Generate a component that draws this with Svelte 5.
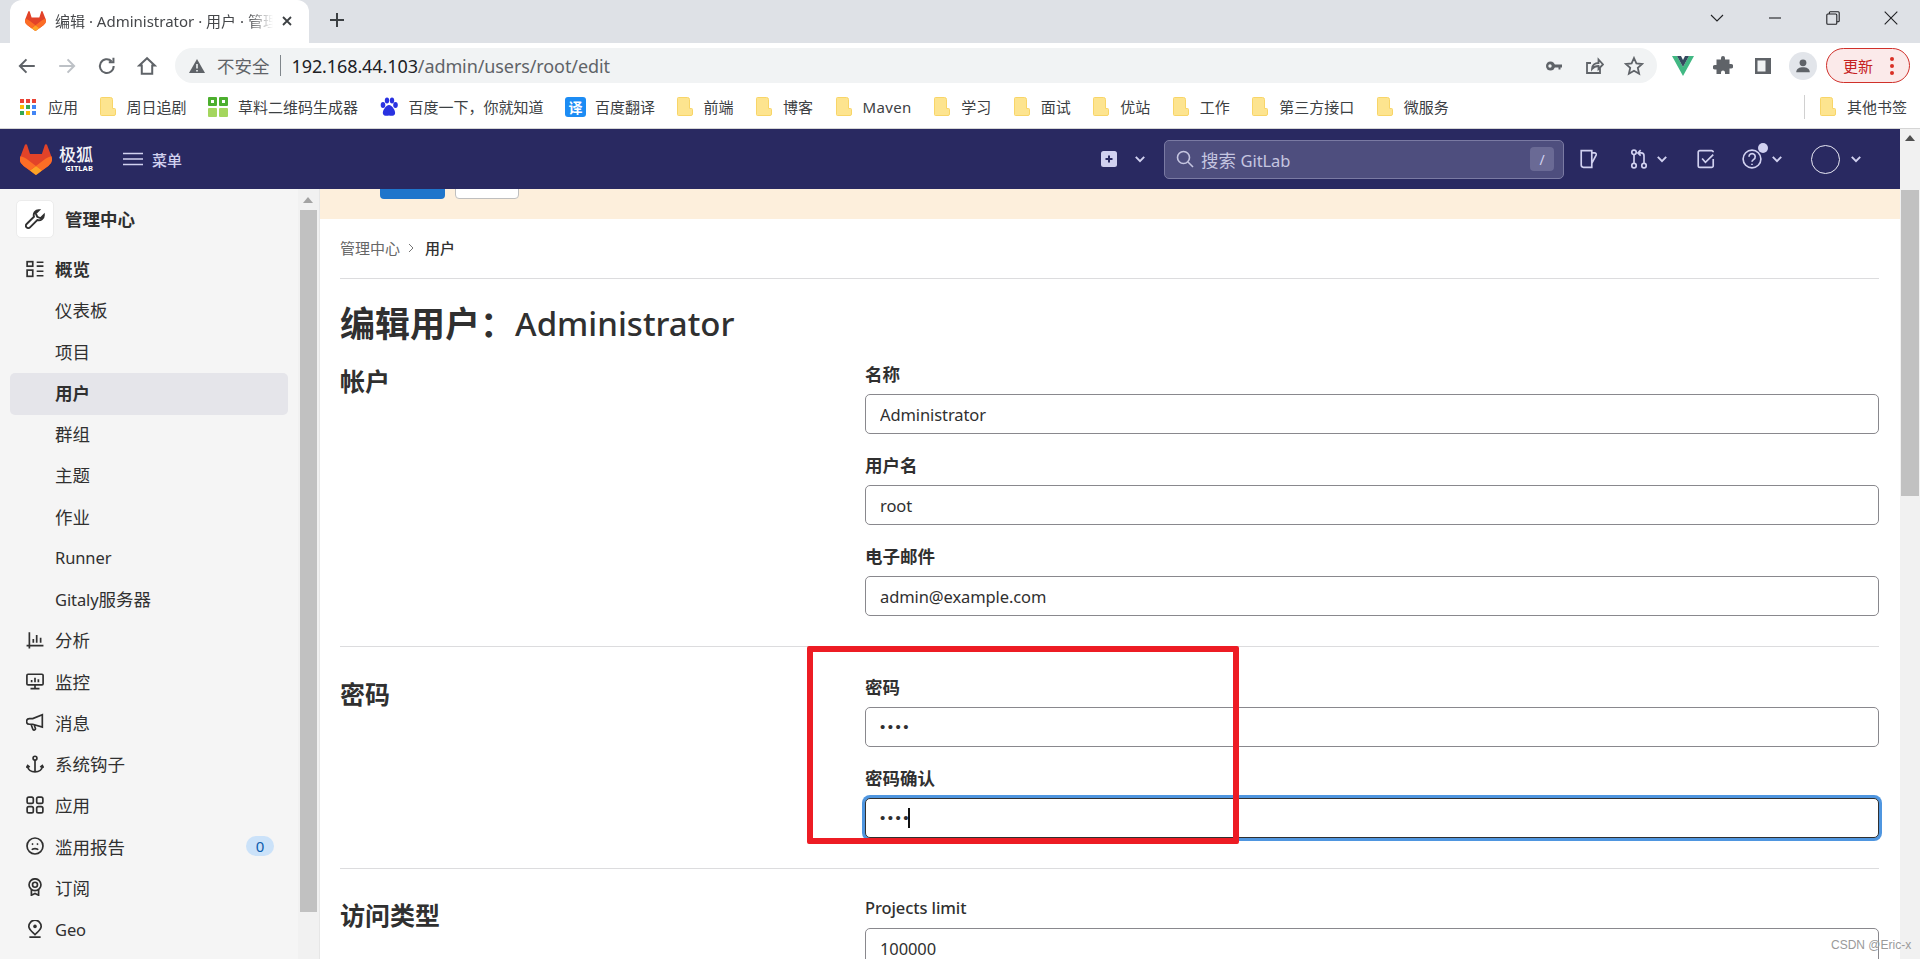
<script>
  const bookmarks = [
    { label: '应用', kind: 'apps' },
    { label: '周日追剧', kind: 'folder' },
    { label: '草料二维码生成器', kind: 'qr' },
    { label: '百度一下，你就知道', kind: 'baidu' },
    { label: '百度翻译', kind: 'tr' },
    { label: '前端', kind: 'folder' },
    { label: '博客', kind: 'folder' },
    { label: 'Maven', kind: 'folder', wide: true },
    { label: '学习', kind: 'folder' },
    { label: '面试', kind: 'folder' },
    { label: '优站', kind: 'folder' },
    { label: '工作', kind: 'folder' },
    { label: '第三方接口', kind: 'folder' },
    { label: '微服务', kind: 'folder' }
  ];
  const appColors = ['#ea4335','#ea4335','#ea4335','#fbbc05','#34a853','#4285f4','#34a853','#fbbc05','#4285f4'];
  const menu = [
    { label: '概览', icon: 'overview', bold: true },
    { label: '仪表板' },
    { label: '项目' },
    { label: '用户', active: true },
    { label: '群组' },
    { label: '主题' },
    { label: '作业' },
    { lat: 'Runner', label: '' },
    { lat: 'Gitaly', label: '服务器' },
    { label: '分析', icon: 'chart' },
    { label: '监控', icon: 'monitor' },
    { label: '消息', icon: 'horn' },
    { label: '系统钩子', icon: 'hook' },
    { label: '应用', icon: 'apps' },
    { label: '滥用报告', icon: 'frown', badge: '0' },
    { label: '订阅', icon: 'cert' },
    { lat: 'Geo', label: '', icon: 'pin' }
  ];
</script>

{#snippet chev()}
  <svg class="chev" viewBox="0 0 10 10"><path d="M1.5 3.2 5 6.8l3.5-3.6" /></svg>
{/snippet}

{#snippet tanuki(cls)}
  <svg class={cls} viewBox="0 0 25 24">
    <path fill="#E24329" d="M24.507 9.5l-.034-.09L21.082.562a.896.896 0 00-1.694.091l-2.29 7.01H7.825L5.535.653a.898.898 0 00-1.694-.09L.451 9.411.416 9.5a6.297 6.297 0 002.09 7.278l.012.01.03.022 5.16 3.867 2.56 1.935 1.554 1.176a1.051 1.051 0 001.268 0l1.555-1.176 2.56-1.935 5.197-3.89.014-.01A6.297 6.297 0 0024.507 9.5z"/>
    <path fill="#FC6D26" d="M24.507 9.5l-.034-.09a11.44 11.44 0 00-4.56 2.051l-7.447 5.632 4.742 3.584 5.197-3.89.014-.01A6.297 6.297 0 0024.507 9.5z"/>
    <path fill="#FCA326" d="M7.707 20.677l2.56 1.935 1.555 1.176a1.051 1.051 0 001.268 0l1.555-1.176 2.56-1.935-4.743-3.584-4.755 3.584z"/>
    <path fill="#FC6D26" d="M5.01 11.461a11.43 11.43 0 00-4.56-2.05L.416 9.5a6.297 6.297 0 002.09 7.278l.012.01.03.022 5.16 3.867 4.745-3.584-7.444-5.632z"/>
  </svg>
{/snippet}

{#snippet menuIcon(name)}
  <svg class="micon" viewBox="0 0 16 16">
    {#if name === 'overview'}
      <rect x="1" y="1.5" width="5" height="4"/><rect x="1" y="9" width="5" height="5.5"/>
      <path d="M9.5 2h6M9.5 5.500h6M9.500 10h6M9.500 14h6"/>
    {:else if name === 'chart'}
      <path d="M3 1v14.500M.5 13h15M6.500 7v3.500M9.500 3.500v7M13 6v4.500"/>
    {:else if name === 'monitor'}
      <rect x=".8" y="2" width="14.400" height="9.500" rx="1"/><path d="M8 11.500v3M4 14.700h8M5 9V7M8 9V5M11 9V6.500"/>
    {:else if name === 'horn'}
      <path d="M14.500 1.500v11L6 10H3a2.200 2.200 0 0 1 0-5h3l8.500-3.500zM4.500 10l1.500 4.300a1.200 1.200 0 0 0 2.300-.8L7.300 10.600"/>
    {:else if name === 'hook'}
      <circle cx="8" cy="2.800" r="1.700"/><path d="M8 4.500v10.500M1.500 9.500c0 3.500 3 5.500 6.500 5.500s6.500-2 6.500-5.500M.3 11.300l1.200-2 1.800 1.500M15.700 11.300l-1.200-2-1.800 1.500"/>
    {:else if name === 'apps'}
      <rect x="1" y="1" width="5.500" height="5.500" rx="1.500"/><rect x="9.500" y="1" width="5.500" height="5.500" rx="1.500"/>
      <rect x="1" y="9.500" width="5.500" height="5.500" rx="1.500"/><rect x="9.500" y="9.500" width="5.500" height="5.500" rx="1.500"/>
    {:else if name === 'frown'}
      <circle cx="8" cy="8" r="7.100"/><path d="M5.200 11.300c.8-1.400 4.800-1.400 5.600 0M5.300 5.800l1 1M10.700 5.800l-1 1"/>
    {:else if name === 'cert'}
      <circle cx="8" cy="6" r="5.300"/><circle cx="8" cy="6" r="2.200"/><path d="M4.800 10.500v4.800L8 13.700l3.200 1.600v-4.800"/>
    {:else if name === 'pin'}
      <path d="M8 13C5.500 10.500 2.500 8.200 2.500 5.700a5.500 5.500 0 0 1 11 0C13.500 8.200 10.500 10.500 8 13zM3 15.300h10"/><circle class="solid" cx="8" cy="5.700" r="1.600"/>
    {/if}
  </svg>
{/snippet}

<div class="screen">
  <header class="tabstrip">
    <div class="tab">
      {@render tanuki('favicon')}
      <span class="tab-title">编辑 · Administrator · 用户 · 管理中心 · GitLab</span>
      <svg class="tab-x" viewBox="0 0 12 12"><path d="M2 2l8 8M10 2l-8 8"/></svg>
    </div>
    <svg class="plus" viewBox="0 0 16 16"><path d="M8 1v14M1 8h14"/></svg>
    <div class="winctl">
      <svg class="win" viewBox="0 0 14 14"><path d="M1 4l6 6 6-6"/></svg>
      <svg class="win" viewBox="0 0 14 14"><path d="M1 7h12"/></svg>
      <svg class="win" viewBox="0 0 14 14"><rect x=".8" y="3" width="10" height="10.200" rx="1"/><path d="M3.300 3V1.800a1 1 0 0 1 1-1h7.900a1 1 0 0 1 1 1v8a1 1 0 0 1-1 1h-1.400"/></svg>
      <svg class="win" viewBox="0 0 14 14"><path d="M.7.7l12.600 12.600M13.300.7.7 13.300"/></svg>
    </div>
  </header>

  <div class="toolbar">
    <button class="tb"><svg viewBox="0 0 18 18"><path d="M16 9H3M8.500 3 2.600 9l5.900 6"/></svg></button>
    <button class="tb off"><svg viewBox="0 0 18 18"><path d="M2 9h13M9.500 3l5.900 6-5.900 6"/></svg></button>
    <button class="tb"><svg viewBox="0 0 18 18"><path d="M15 9a6.200 6.200 0 1 1-1.900-4.400M14.800 1.500v4.200h-4.200"/></svg></button>
    <button class="tb"><svg viewBox="0 0 18 18"><path d="M9 2 2 8.500h2.300V16h9.400V8.500H16z"/></svg></button>
    <div class="omni">
      <svg class="warn" viewBox="0 0 18 18"><path d="M9 2 17 16H1z"/><path class="cut" d="M9 7v4.500M9 13v1.500"/></svg>
      <span class="insecure">不安全</span>
      <span class="sep"></span>
      <span class="url"><b>192.168.44.103</b>/admin/users/root/edit</span>
      <div class="omni-actions">
        <button class="tb"><svg viewBox="0 0 20 20"><circle class="filled" cx="6.500" cy="10" r="4.500"/><path class="bar" d="M9 8.500h9v3h-1.500v2h-2v-2H10z"/><circle class="hole" cx="6" cy="10" r="1.700"/></svg></button>
        <button class="tb"><svg viewBox="0 0 20 20"><path d="M16 12v5H3V7h4M8 13c0-4 3-6 6.500-6V3.500L19 8.500l-4.500 4.500V10c-3 0-5 1-6.500 3z"/></svg></button>
        <button class="tb"><svg viewBox="0 0 20 20"><path d="M10 2l2.400 5.400 5.800.6-4.400 3.900 1.300 5.800L10 14.700l-5.100 3 1.300-5.800L1.800 8l5.800-.6z"/></svg></button>
      </div>
    </div>
    <button class="tb vue"><svg viewBox="0 0 24 22"><path fill="#41b883" d="M1 1h5l6 11L18 1h5L12 21z"/><path fill="#34495e" d="M6 1h4l2 4 2-4h4l-6 11z"/></svg></button>
    <button class="tb"><svg viewBox="0 0 20 20"><path class="filled" d="M8 2a2 2 0 0 1 4 0v1.500h4.500V8H18a2.200 2.200 0 0 1 0 4.500h-1.500V18H12v-1.500a2 2 0 0 0-4 0V18H3.500v-4.500H2a2.200 2.200 0 0 1 0-4.500h1.500V3.500H8z"/></svg></button>
    <button class="tb"><svg viewBox="0 0 20 20"><rect x="2" y="2" width="16" height="16" class="filled"/><rect x="4.500" y="4.500" width="8" height="11" class="hole"/></svg></button>
    <button class="tb"><span class="profile"><svg viewBox="0 0 20 20"><circle class="filled" cx="10" cy="6.500" r="3.800"/><path class="filled" d="M2.500 17c0-4 3.500-5.500 7.500-5.500s7.500 1.500 7.500 5.500z"/></svg></span></button>
    <div class="update"><span>更新</span><span class="kebab"><i></i><i></i><i></i></span></div>
  </div>

  <nav class="bookmarks">
    {#each bookmarks as b}
      <div class="bm">
        <span class="bm-ico {b.kind}">
          {#if b.kind === 'apps'}
            <span class="appgrid">{#each appColors as c}<i style="background:{c}"></i>{/each}</span>
          {:else if b.kind === 'folder'}
            <svg class="folder" viewBox="0 0 16 19"><path d="M1.500.5h9a2 2 0 0 1 2 2v9h2a1 1 0 0 1 1 1v4.500a1.500 1.500 0 0 1-1.500 1.500h-12.500a1 1 0 0 1-1-1V1.500a1 1 0 0 1 1-1z"/></svg>
          {:else if b.kind === 'qr'}
            <svg class="qr" viewBox="0 0 20 20"><rect x="0" y="0" width="9" height="9" rx="1" fill="#4caf2e"/><rect x="11" y="0" width="9" height="9" rx="1" fill="#4caf2e"/><rect x="0" y="11" width="9" height="9" rx="1" fill="#a4d65e"/><rect x="11" y="11" width="9" height="9" rx="1" fill="#a4d65e"/><rect x="3" y="3" width="3" height="3" fill="#fff"/><rect x="14" y="3" width="3" height="3" fill="#fff"/></svg>
          {:else if b.kind === 'baidu'}
            <svg class="paw" viewBox="0 0 18 20" fill="#2932e1"><ellipse cx="3" cy="8" rx="2.300" ry="3"/><ellipse cx="7" cy="3.500" rx="2.200" ry="3"/><ellipse cx="12" cy="3.500" rx="2.200" ry="3"/><ellipse cx="15.500" cy="8" rx="2.300" ry="3"/><path d="M9 8c3 0 7 6 6 9-.6 2-4 2-6 1.500C7 19 3.500 19 3 17 2 14 6 8 9 8z"/></svg>
          {:else if b.kind === 'tr'}
            <span class="trbox">译</span>
          {/if}
        </span>
        <span class:wide={b.wide}>{b.label}</span>
      </div>
    {/each}
    <div class="bm-right">
      <span class="bm-div"></span>
      <div class="bm">
        <span class="bm-ico folder"><svg class="folder" viewBox="0 0 16 19"><path d="M1.500.5h9a2 2 0 0 1 2 2v9h2a1 1 0 0 1 1 1v4.500a1.500 1.500 0 0 1-1.500 1.500h-12.500a1 1 0 0 1-1-1V1.500a1 1 0 0 1 1-1z"/></svg></span>
        <span>其他书签</span>
      </div>
    </div>
  </nav>

  <div class="viewport">
    <div class="page">
      <div class="navbar">
        {@render tanuki('logo')}
        <div class="brand"><span class="brand-cn">极狐</span><span class="brand-en">GITLAB</span></div>
        <svg class="burger" viewBox="0 0 20 14"><path d="M0 1.500h20M0 7h20M0 12.500h20"/></svg>
        <span class="menu-label">菜单</span>

        <svg class="plus-box" viewBox="0 0 16 16"><rect width="16" height="16" rx="2.500" fill="#d1d1f0"/><path d="M8 4.500v7M4.500 8h7" stroke="#292961" stroke-width="2"/></svg>
        <span class="c-plus">{@render chev()}</span>
        <div class="search">
          <svg class="s-ico" viewBox="0 0 18 18"><circle cx="7.500" cy="7.500" r="6"/><path d="M12 12l5 5"/></svg>
          <span>搜索 <span class="lat">GitLab</span></span>
          <kbd>/</kbd>
        </div>
        <svg class="nico n-issue" viewBox="0 0 18 18"><path d="M2 1.500h9.500v15H4a2 2 0 0 1-2-2zM11.500 3.500H14c1 0 1.800 1 1.400 2L11.500 13"/></svg>
        <svg class="nico n-mr" viewBox="0 0 18 18"><circle cx="4.500" cy="3" r="2"/><circle cx="4.500" cy="15" r="2"/><circle cx="13.500" cy="15" r="2"/><path d="M4.500 5v8M13.500 13V6c0-1.500-1-2.500-2.500-2.500H8.500M10.500 1 8 3.500 10.500 6"/></svg>
        <span class="c-mr">{@render chev()}</span>
        <svg class="nico n-todo" viewBox="0 0 18 18"><path d="M15.500 9v6a1.500 1.500 0 0 1-1.500 1.500H3.500A1.500 1.500 0 0 1 2 15V3a1.500 1.500 0 0 1 1.500-1.500H14A1.500 1.500 0 0 1 15.500 3M5.500 8.500l3 3.500L15.500 5"/></svg>
        <span class="help">
          <svg class="nico" viewBox="0 0 18 18"><circle cx="9" cy="9" r="8"/><path d="M6.300 7a2.800 2.800 0 1 1 4.300 2.300C9.500 10 9 10.500 9 11.500M9 13.200v1.200"/></svg>
          <i class="help-dot"></i>
        </span>
        <span class="c-help">{@render chev()}</span>
        <span class="avatar"></span>
        <span class="c-av">{@render chev()}</span>
      </div>

      <div class="under">
        <aside class="sidebar">
          <div class="side-main">
            <div class="ctx">
              <span class="tile">
                <svg class="micon" viewBox="0 0 16 16"><path d="M11.200.9a4 4 0 0 0-4 5.300L1.300 12a1.900 1.900 0 0 0 2.700 2.700l5.800-5.900a4 4 0 0 0 5.300-4L12.500 7.400 9.800 6.200 8.600 3.500 11.200.9z"/></svg>
              </span>
              <span class="ctx-title">管理中心</span>
            </div>
            {#each menu as m}
              <div class="item" class:active={m.active} class:bold={m.bold}>
                {#if m.icon}{@render menuIcon(m.icon)}{:else}<span class="micon-space"></span>{/if}
                <span>{#if m.lat}<span class="lat">{m.lat}</span>{/if}{m.label}</span>
                {#if m.badge}<span class="badge">{m.badge}</span>{/if}
              </div>
            {/each}
          </div>
          <div class="side-scroll"><i class="arrow"></i><i class="thumb-side"></i></div>
        </aside>

        <main class="content">
          <div class="banner"><span class="btn-blue"></span><span class="btn-white"></span></div>
          <div class="inner">
            <div class="crumbs">
              <span class="crumb-a">管理中心</span>
              <svg class="crumb-c" viewBox="0 0 8 10"><path d="M2 1l4 4-4 4"/></svg>
              <span class="crumb-b">用户</span>
            </div>
            <h1><b>编辑用户：</b>Administrator</h1>

            <section class="sec first">
              <h3>帐户</h3>
              <div class="fields">
                <div class="field"><label for="f1">名称</label><input id="f1" value="Administrator" readonly /></div>
                <div class="field"><label for="f2">用户名</label><input id="f2" value="root" readonly /></div>
                <div class="field"><label for="f3">电子邮件</label><input id="f3" value="admin@example.com" readonly /></div>
              </div>
            </section>
            <section class="sec">
              <h3>密码</h3>
              <div class="fields">
                <div class="field"><label for="f4">密码</label><div class="input dots">••••</div></div>
                <div class="field"><label for="f5">密码确认</label><div class="input dots focus">••••<i class="caret"></i></div></div>
              </div>
            </section>
            <section class="sec">
              <h3>访问类型</h3>
              <div class="fields">
                <div class="field"><label class="plain" for="f6">Projects limit</label><input id="f6" value="100000" readonly /></div>
              </div>
            </section>
          </div>
        </main>
      </div>
    </div>
    <div class="page-scroll"><i class="arrow"></i><i class="thumb-page"></i></div>
  </div>

  <div class="annot"></div>
  <div class="wm">CSDN @Eric-x</div>
</div>

<style>
  :global(body) { margin: 0; background: #fff; }
  .screen {
    position: relative;
    width: 1920px; height: 959px; overflow: hidden;
    display: flex; flex-direction: column;
    font-family: "Noto Sans", "Noto Sans CJK SC", sans-serif;
    color: #303030;
  }
  button { border: 0; background: none; padding: 0; }
  svg { display: block; }
  .lat { font-size: 16.500px; letter-spacing: -.1px; }

  /* browser chrome */
  .tabstrip { height: 43px; background: #dee1e6; display: flex; align-items: flex-end; padding-left: 10px; flex: none; }
  .tab {
    width: 299px; height: 43px; background: #fff; border-radius: 12px 12px 0 0;
    display: flex; align-items: center; padding: 0 0 2px 15px; box-sizing: border-box;
  }
  .favicon { width: 21px; height: 20px; flex: none; }
  .tab-title {
    margin-left: 9px; width: 218px; overflow: hidden; white-space: nowrap; font-size: 15px; color: #45474a;
    -webkit-mask-image: linear-gradient(90deg, #000 88%, transparent);
    mask-image: linear-gradient(90deg, #000 88%, transparent);
  }
  .tab-x { width: 12px; height: 12px; margin-left: 8px; }
  .tab-x path { stroke: #3c4043; stroke-width: 1.800; fill: none; }
  .plus { width: 16px; height: 16px; margin: 0 0 15px 20px; }
  .plus path { stroke: #3c4043; stroke-width: 2; fill: none; }
  .winctl { margin-left: auto; height: 43px; box-sizing: border-box; display: flex; align-items: flex-start; padding: 11px 22px 0 0; gap: 44px; }
  .win { width: 14px; height: 14px; }
  .win path, .win rect { stroke: #202124; stroke-width: 1.100; fill: none; }

  .toolbar { height: 45px; background: #fff; display: flex; align-items: center; padding-left: 7px; flex: none; }
  .tb { width: 40px; height: 35px; display: flex; align-items: center; justify-content: center; flex: none; }
  .tb svg { width: 20px; height: 20px; }
  .tb path { stroke: #5f6368; stroke-width: 1.800; fill: none; }
  .tb.off path { stroke: #bdc1c6; }
  .tb .filled { fill: #5f6368; stroke: none; }
  .tb .bar { fill: #5f6368; stroke: none; }
  .tb .hole { fill: #f1f3f4; stroke: none; }
  .tb.vue { margin-left: 6px; }
  .tb.vue svg { width: 24px; height: 22px; }
  .tb.vue path { stroke: none; }
  .tb.vue path:first-child { fill: #41b883; }
  .tb.vue path:last-child { fill: #34495e; }
  .omni {
    margin-left: 8px; width: 1482px; height: 35px; border-radius: 18px; background: #f1f3f4; flex: none;
    display: flex; align-items: center; padding-left: 13px; box-sizing: border-box;
  }
  .warn { width: 18px; height: 18px; flex: none; }
  .warn path { fill: #5f6368; }
  .warn .cut { stroke: #f1f3f4; stroke-width: 1.600; fill: none; }
  .insecure { margin-left: 11px; font-size: 17.500px; color: #5f6368; white-space: nowrap; }
  .sep { width: 1px; height: 21px; background: #80868b; margin: 0 11px 0 10px; }
  .url { font-size: 18px; color: #5f6368; white-space: nowrap; letter-spacing: -.1px; }
  .url b { font-weight: 400; color: #202124; }
  .omni-actions { margin-left: auto; display: flex; padding-right: 3px; }
  .profile { width: 28px; height: 28px; border-radius: 50%; background: #e2e5ea; display: flex; align-items: center; justify-content: center; }
  .tb .profile svg { width: 18px; height: 18px; }
  .update {
    margin-left: 3px; width: 84px; height: 35px; box-sizing: border-box; border: 1.500px solid #d0302a; border-radius: 18px;
    background: #fbeaea; color: #c5221f; font-size: 15px; display: flex; align-items: center; padding-left: 16px; flex: none;
  }
  .kebab { margin-left: 17px; display: flex; flex-direction: column; gap: 3px; }
  .kebab i { width: 4px; height: 4px; border-radius: 50%; background: #d93025; display: block; }

  .bookmarks {
    height: 41px; box-sizing: border-box; border-bottom: 1px solid #d5d5d5; background: #fff; flex: none;
    display: flex; align-items: center; padding: 0 13px 3px 20px; font-size: 15px; color: #3c4043;
  }
  .bm { display: flex; align-items: center; margin-right: 21.500px; white-space: nowrap; }
  .bm:nth-child(n+6) { margin-right: 22.500px; }
  .wide { letter-spacing: .35px; }
  .bm-ico { display: flex; align-items: center; flex: none; }
  .bm-ico.apps { width: 28px; }
  .bm-ico.folder { width: 27px; }
  .bm-ico.qr { width: 30px; }
  .bm-ico.baidu { width: 29px; }
  .bm-ico.tr { width: 30px; }
  .appgrid { width: 16px; display: grid; grid-template-columns: repeat(3, 4px); gap: 2px; }
  .appgrid i { width: 4px; height: 4px; display: block; }
  .folder { width: 16px; height: 19px; }
  .folder path { fill: #fde48f; stroke: #f8d568; stroke-width: 1; }
  .qr { width: 20px; height: 20px; }
  .paw { width: 18px; height: 20px; }
  .trbox { width: 21px; height: 20px; border-radius: 3px; background: #1c8cf4; color: #fff; font-size: 14px; font-weight: 700; display: flex; align-items: center; justify-content: center; }
  .bm-right { margin-left: auto; display: flex; align-items: center; }
  .bm-right .bm { margin-right: 0; }
  .bm-div { width: 1px; height: 24px; background: #d0d0d0; margin-right: 15px; }

  .viewport { flex: 1; display: flex; min-height: 0; }
  .page { width: 1900px; flex: none; display: flex; flex-direction: column; }
  .page-scroll { width: 20px; background: #f1f1f1; position: relative; padding-top: 6px; box-sizing: border-box; }
  .arrow { display: block; width: 0; height: 0; border: 5px solid transparent; border-top: 0; border-bottom: 6px solid #505050; margin: 0 auto; }
  .thumb-page { display: block; width: 18px; height: 306px; background: #c1c1c1; margin: 49px 0 0 1px; }

  /* nav */
  .navbar { height: 60px; background: #292961; display: flex; align-items: center; padding-left: 20px; flex: none; }
  .logo { width: 32px; height: 31px; flex: none; }
  .brand { margin-left: 7px; width: 34px; display: flex; flex-direction: column; align-items: flex-end; color: #fff; }
  .brand-cn { font-size: 17px; line-height: 19px; font-weight: 500; white-space: nowrap; color: #f3f3f8; }
  .brand-en { font-size: 7.500px; line-height: 9px; font-weight: 700; letter-spacing: .1px; }
  .burger { width: 20px; height: 14px; margin-left: 30px; }
  .burger path { stroke: #d1d1f0; stroke-width: 1.600; }
  .menu-label { margin-left: 9px; font-size: 15px; font-weight: 500; color: #d1d1f0; }
  .plus-box { width: 16px; height: 16px; margin-left: 919px; flex: none; }
  .chev { width: 12px; height: 12px; }
  .chev path { stroke: #d1d1f0; stroke-width: 1.600; fill: none; }
  .c-plus { margin-left: 17px; }
  .search {
    margin-left: 18px; width: 400px; height: 39px; box-sizing: border-box; background: #4e4e7e; border: 1px solid #7a7aa3; border-radius: 5px;
    display: flex; align-items: center; padding: 0 9px 0 11px; font-size: 17.500px; color: #c5c5e0; flex: none;
  }
  .s-ico { width: 18px; height: 18px; margin-right: 7px; }
  .s-ico circle, .s-ico path { stroke: #c5c5e0; stroke-width: 1.600; fill: none; }
  .search kbd { margin-left: auto; width: 24px; height: 24px; border-radius: 4px; background: #6a6a95; display: flex; align-items: center; justify-content: center; font: 14px "Noto Sans", sans-serif; color: #d1d1f0; }
  .nico { width: 20px; height: 20px; flex: none; }
  .nico path, .nico circle { stroke: #d1d1f0; stroke-width: 1.500; fill: none; }
  .n-issue { margin-left: 15px; }
  .n-mr { margin-left: 30px; }
  .c-mr { margin-left: 7px; }
  .n-todo { margin-left: 28px; }
  .help { margin-left: 26px; position: relative; }
  .help-dot { position: absolute; top: -6px; right: -6px; width: 10px; height: 10px; border-radius: 50%; background: #d1d1f0; }
  .c-help { margin-left: 9px; }
  .avatar { margin-left: 28px; width: 29px; height: 29px; border-radius: 50%; border: 1px solid #e8e8f4; box-sizing: border-box; flex: none; }
  .c-av { margin-left: 10px; }

  /* body */
  .under { flex: 1; min-height: 0; display: flex; }
  .sidebar { width: 320px; flex: none; display: flex; background: #f5f5f5; box-sizing: border-box; border-right: 1px solid #e6e6e6; }
  .side-main { width: 298px; flex: none; padding: 11px 10px 0; box-sizing: border-box; }
  .side-scroll { flex: 1; background: #f1f1f1; padding-top: 8px; box-sizing: border-box; }
  .side-scroll .arrow { border-bottom-color: #a3a3a3; margin-left: 5px; }
  .thumb-side { display: block; width: 17px; height: 702px; background: #c1c1c1; margin: 7px 0 0 2px; }
  .ctx { display: flex; align-items: center; height: 38px; margin: 0 0 11.500px 6px; }
  .tile { width: 38px; height: 38px; background: #fff; border: 1px solid #ececec; border-radius: 5px; box-sizing: border-box; display: flex; align-items: center; justify-content: center; }
  .tile .micon { width: 20px; height: 20px; }
  .ctx-title { margin-left: 11px; font-size: 17.500px; font-weight: 700; margin-top: -2px; }
  .item { height: 41.250px; box-sizing: border-box; display: flex; align-items: center; padding: 0 0 3px 16px; border-radius: 5px; font-size: 17.500px; color: #303030; }
  .item.active { background: #e5e5ea; font-weight: 700; }
  .item.bold { font-weight: 700; }
  .micon { width: 18px; height: 18px; flex: none; margin-right: 11px; }
  .tile .micon { margin: 0; }
  .micon-space { width: 18px; margin-right: 11px; flex: none; }
  .micon path, .micon rect, .micon circle { stroke: #303030; stroke-width: 1.500; fill: none; }
  .micon .solid { fill: #303030; stroke: none; }
  .badge { margin-left: auto; margin-right: 14px; width: 28px; height: 20px; border-radius: 10px; background: #cbe2f9; color: #0b5cad; font-size: 15px; display: flex; align-items: center; justify-content: center; }

  .content { flex: 1; min-width: 0; background: #fff; }
  .banner { height: 30px; background: #fdefdc; overflow: hidden; display: flex; align-items: flex-end; padding: 0 0 20px 60px; box-sizing: border-box; gap: 10px; }
  .btn-blue { width: 65px; height: 30px; flex: none; background: #1f75cb; border-radius: 4px; }
  .btn-white { width: 64px; height: 30px; flex: none; background: #fff; border: 1px solid #bfbfbf; box-sizing: border-box; border-radius: 4px; }
  .inner { padding: 0 21px 0 20px; }
  .crumbs { height: 60px; box-sizing: border-box; border-bottom: 1px solid #dcdcde; display: flex; align-items: center; padding-bottom: 2px; font-size: 15px; }
  .crumb-a { color: #666; }
  .crumb-c { width: 8px; height: 10px; margin: 0 10px 0 7px; }
  .crumb-c path { stroke: #777; stroke-width: 1; fill: none; }
  .crumb-b { color: #303030; font-weight: 500; }
  h1 { margin: 0; height: 84px; box-sizing: border-box; padding-top: 5px; display: flex; align-items: center; font-size: 33px; font-weight: 500; line-height: 1; color: #303030; white-space: nowrap; }
  h1 b { font-weight: 700; font-size: 35px; }
  .sec { display: grid; grid-template-columns: 525px 1014px; padding: 28.500px 0 30px; border-bottom: 1px solid #dcdcde; }
  .sec.first { padding-top: 0; }
  h3 { margin: 0; font-size: 25px; font-weight: 700; line-height: 36px; color: #303030; }
  .field { margin-bottom: 20px; }
  .field:last-child { margin-bottom: 0; }
  label { display: block; height: 31px; line-height: 22px; font-size: 17.500px; font-weight: 700; }
  label.plain { font-weight: 500; font-size: 16.500px; letter-spacing: -.1px; }
  input, .input {
    display: block; width: 100%; height: 40px; box-sizing: border-box; border: 1px solid #89888d; border-radius: 5px;
    padding: 0 14px; font: 16.500px "Noto Sans", "Noto Sans CJK SC", sans-serif; letter-spacing: -.1px; color: #303030; background: #fff; outline: none;
  }
  .input { display: flex; align-items: center; position: relative; }
  .dots { font-size: 15px; letter-spacing: 2.500px; color: #303030; font-family: "Liberation Sans", sans-serif; }
  .focus { border-color: #303030; box-shadow: 0 0 0 3px #4f96e0; }
  .caret { width: 2px; height: 20px; background: #111; margin-left: -3px; display: block; }

  .annot { position: absolute; left: 807px; top: 646px; width: 432px; height: 198px; box-sizing: border-box; border: 6px solid #ed1c24; border-radius: 2px; }
  .wm { position: absolute; left: 1831px; top: 938px; font: 12px "Liberation Sans", sans-serif; color: #9a9a9a; }
</style>
